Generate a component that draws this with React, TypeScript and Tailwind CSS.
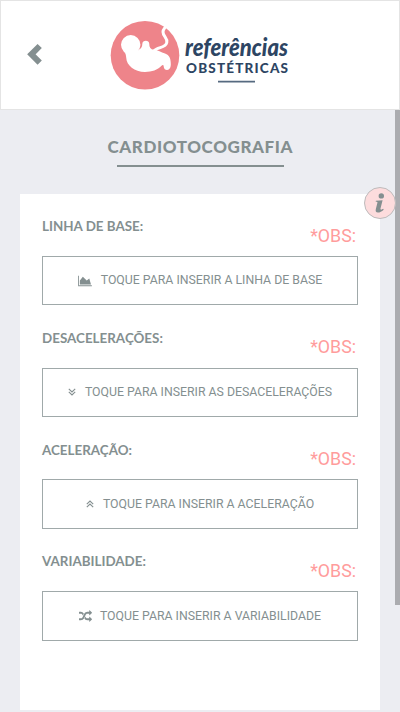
import React from 'react';

interface Section {
  id: string;
  label: string;
  action: string;
  icon: React.ReactNode;
}

const AreaChartIcon = () => <svg className="h-[12px] w-[14px] mr-[9px]" viewBox="0 0 2048 1792" fill="currentColor">
    <path d="M2048 1536v128h-2048v-1536h128v1408h1920zm-384-1024l256 896h-1664v-576l448-576 576 576z" />
  </svg>;

const DoubleDownIcon = () => <svg className="h-[8px] w-[8px] mr-[9px]" viewBox="0 0 8 8" fill="none" stroke="currentColor" strokeWidth="1.1">
    <path d="M0.8 0.8L4 3.9L7.2 0.8M0.8 3.9L4 7L7.2 3.9" />
  </svg>;

const DoubleUpIcon = () => <svg className="h-[8px] w-[8px] mr-[9px]" viewBox="0 0 8 8" fill="none" stroke="currentColor" strokeWidth="1.1">
    <path d="M0.8 4.1L4 1L7.2 4.1M0.8 7.2L4 4.1L7.2 7.2" />
  </svg>;

const RandomIcon = () => <svg className="h-[13px] w-[13px] mr-[8px]" viewBox="0 0 1792 1792" fill="currentColor">
    <path d="M666 481q-60 92-137 273-22-45-37-72.5t-40.5-63.5-51-56.5-63-35-81.5-14.5h-224q-14 0-23-9t-9-23v-192q0-14 9-23t23-9h224q250 0 410 225zm1126 799q0 14-9 23l-320 320q-9 9-23 9-13 0-22.5-9.5t-9.5-22.5v-192q-32 0-85 .5t-81 1-73-1-71-5-64-10.5-63-18.5-58-28.5-59-40-55-53.5-56-69.5q59-93 136-273 22 45 37 72.5t40.5 63.5 51 56.5 63 35 81.5 14.5h256v-192q0-14 9-23t23-9q12 0 24 10l319 319q9 9 9 23zm0-896q0 14-9 23l-320 320q-9 9-23 9-13 0-22.5-9.5t-9.5-22.5v-192h-256q-48 0-87 15t-69 45-51 61.5-45 77.5q-32 62-78 171-29 66-49.5 111t-54 105-64 100-74 83-90 68.5-106.5 42-128 16.5h-224q-14 0-23-9t-9-23v-192q0-14 9-23t23-9h224q48 0 87-15t69-45 51-61.5 45-77.5q32-62 78-171 29-66 49.5-111t54-105 64-100 74-83 90-68.5 106.5-42 128-16.5h256v-192q0-14 9-23t23-9q12 0 24 10l319 319q9 9 9 23z" />
  </svg>;

const sections: Section[] = [{
  id: 'linha-de-base',
  label: 'LINHA DE BASE:',
  action: 'TOQUE PARA INSERIR A LINHA DE BASE',
  icon: <AreaChartIcon />
}, {
  id: 'desaceleracoes',
  label: 'DESACELERAÇÕES:',
  action: 'TOQUE PARA INSERIR AS DESACELERAÇÕES',
  icon: <DoubleDownIcon />
}, {
  id: 'aceleracao',
  label: 'ACELERAÇÃO:',
  action: 'TOQUE PARA INSERIR A ACELERAÇÃO',
  icon: <DoubleUpIcon />
}, {
  id: 'variabilidade',
  label: 'VARIABILIDADE:',
  action: 'TOQUE PARA INSERIR A VARIABILIDADE',
  icon: <RandomIcon />
}];

const Logo = () => <svg className="h-[80px] w-[188px] overflow-visible" viewBox="108 15 188 80">
    <circle cx="145" cy="55.3" r="34.3" fill="#ee848a" />
    <g fill="#fff">
      <circle cx="130.700" cy="44.800" r="9.700" />
      <path d="M124 51.500C129 55 136 53 139 49.500C141 48.500 142.300 47 142.300 44C142.300 39.800 149.300 39.800 149.300 44C149.300 47 150.500 49.500 154 49.800C158 50 161 52.500 165 53.500C169.500 55 171 59 170.800 65C170.600 71.500 164 71.500 163.700 66.500C163.600 65 162.800 64.500 161.500 65.800C157.500 70 152 72 145 72C134.500 72 126.500 65.500 126.200 57.500C126.100 55.500 125.500 53 124 51.500Z" />
    </g>
    <path d="M154 51C157.500 46.500 165.500 48.500 166.800 42.500C167.800 38 163 36.500 163 32C163 29.500 164.500 28.500 165.800 26.500" fill="none" stroke="#fff" strokeWidth="3" />
    <g fill="#2d4563">
      <text x="185" y="56" fontFamily="Lato, sans-serif" fontSize="24" fontWeight="900" fontStyle="italic" textLength="103" lengthAdjust="spacingAndGlyphs">referências</text>
      <text x="186" y="72.800" fontFamily="Lato, sans-serif" fontSize="13.500" fontWeight="900" textLength="102" lengthAdjust="spacing">OBSTÉTRICAS</text>
    </g>
    <path d="M218 81.700H255" stroke="#566a80" strokeWidth="1.700" />
  </svg>;

const App = () => {
  return <div className="h-[712px] w-[400px] overflow-hidden bg-[#ecedf2] text-[#848f90] flex flex-col">
      <header className="h-[110px] shrink-0 bg-white border border-[#e4e4e4] flex items-start">
        <button className="mt-[42px] ml-[25px] h-[22px] w-[16px]">
          <svg className="h-[22px] w-[16px]" viewBox="0 0 16 22" fill="none" stroke="currentColor" strokeWidth="6">
            <path d="M13.700 3L5.400 11.300L13.700 19.600" />
          </svg>
        </button>
        <div className="ml-[66px] mt-[14px]">
          <Logo />
        </div>
      </header>
      <div className="flex flex-1 min-h-0">
        <main className="flex-1 pl-5 pt-[26px]">
          <div className="w-[360px] flex flex-col items-center">
            <h1 className="h-[22px]">
              <svg className="h-[22px] w-[188px]" viewBox="106 136 188 22">
                <text x="107.500" y="152.500" fill="#848f90" fontFamily="Lato, sans-serif" fontSize="17" fontWeight="900" textLength="185" lengthAdjust="spacing">CARDIOTOCOGRAFIA</text>
              </svg>
            </h1>
            <div className="mt-[7px] h-[2px] w-[167px] bg-[#848f90]" />
          </div>
          <div className="relative mt-[27px] h-[516px] w-[360px] bg-white px-[22px] pt-[22px]">
            <button className="absolute -top-[7px] left-[344px] h-8 w-8 rounded-full border border-[#bdbbbc] bg-[#fddcdd] flex items-center justify-center">
              <svg className="h-[20px] w-[10px]" viewBox="0 0 10 20" fill="currentColor">
                <circle cx="6.300" cy="2.900" r="2.700" />
                <path d="M0.900 7.700L7.600 7.200L5.500 15.500C5.200 16.900 6.400 17 8.200 15.800L8.700 16.700C6.700 18.600 4.800 19.500 3 19.500C0.700 19.500 0.300 18 0.900 15.800L2.400 9.800C2.600 8.900 2.200 8.600 0.700 8.700Z" />
              </svg>
            </button>
            {sections.map(section => <section key={section.id} className="h-[111.8px]">
                <div className="h-[39.8px] flex justify-between">
                  <h2 className="font-[Lato,sans-serif] font-bold text-[13.400px] leading-[20px]">
                    {section.label}
                  </h2>
                  <span className="mt-[9.600px] mr-[2px] font-[Roboto,sans-serif] text-[17.800px] leading-[20px] text-[#ff9c9c]">
                    *OBS:
                  </span>
                </div>
                <button className="h-[49.700px] w-[316px] border border-[#a0a9aa] font-[Roboto,sans-serif] text-[12.300px] flex items-center justify-center">
                  {section.icon}
                  <span>{section.action}</span>
                </button>
              </section>)}
          </div>
        </main>
        <div className="h-[495px] w-[5px] bg-[#abacb0]" />
      </div>
    </div>;
};
export default App;
